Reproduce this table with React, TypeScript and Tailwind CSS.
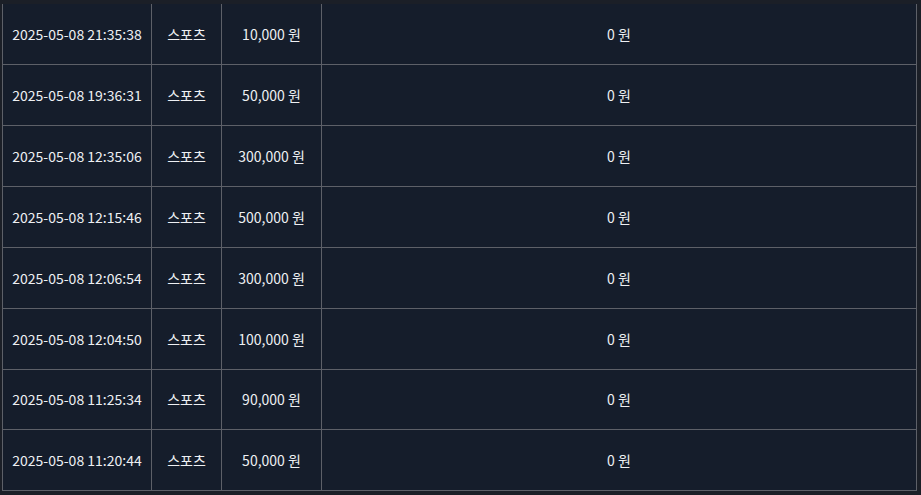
const rows = [
  { time: "2025-05-08 21:35:38", type: "스포츠", bet: "10,000 원", win: "0 원" },
  { time: "2025-05-08 19:36:31", type: "스포츠", bet: "50,000 원", win: "0 원" },
  { time: "2025-05-08 12:35:06", type: "스포츠", bet: "300,000 원", win: "0 원" },
  { time: "2025-05-08 12:15:46", type: "스포츠", bet: "500,000 원", win: "0 원" },
  { time: "2025-05-08 12:06:54", type: "스포츠", bet: "300,000 원", win: "0 원" },
  { time: "2025-05-08 12:04:50", type: "스포츠", bet: "100,000 원", win: "0 원" },
  { time: "2025-05-08 11:25:34", type: "스포츠", bet: "90,000 원", win: "0 원" },
  { time: "2025-05-08 11:20:44", type: "스포츠", bet: "50,000 원", win: "0 원" },
];

export default function App() {
  return (
    <div className="h-[495px] w-[921px] overflow-hidden bg-[#1b1f27] pl-[2px] pt-[4px] font-['Noto_Sans_CJK_KR','Noto_Sans',sans-serif]">
      <table className="w-[915px] table-fixed border-collapse text-[14px] text-[#eef0f3]">
        <colgroup>
          <col className="w-[149px]" />
          <col className="w-[70px]" />
          <col className="w-[100px]" />
          <col />
        </colgroup>
        <tbody>
          {rows.map((r) => (
            <tr key={r.time} className="h-[60.85px]">
              <td className="border border-t-0 border-[#5d6068] bg-[#151d2b] pt-[1px] text-center">{r.time}</td>
              <td className="border border-t-0 border-[#5d6068] bg-[#151d2b] pt-[1px] text-center">{r.type}</td>
              <td className="border border-t-0 border-[#5d6068] bg-[#151d2b] pt-[1px] text-center">{r.bet}</td>
              <td className="border border-t-0 border-[#5d6068] bg-[#151d2b] pt-[1px] text-center">{r.win}</td>
            </tr>
          ))}
        </tbody>
      </table>
    </div>
  );
}
